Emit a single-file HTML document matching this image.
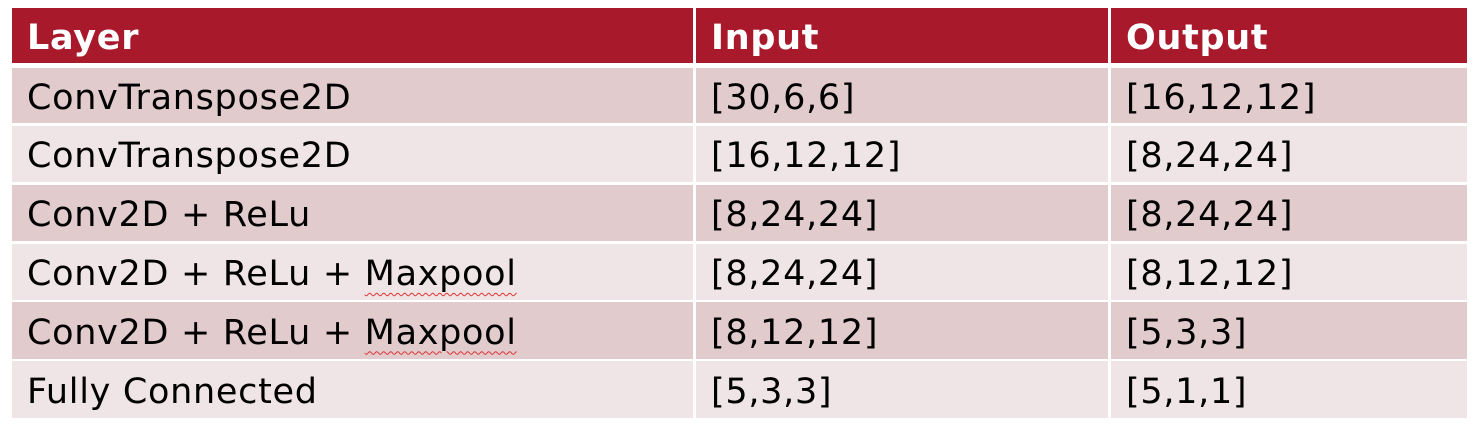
<!DOCTYPE html>
<html><head><meta charset="utf-8"><style>
body{margin:0;width:1480px;height:429px;background:#fff;position:relative;overflow:hidden;font-family:"DejaVu Sans","Liberation Sans",sans-serif;}
.c{position:absolute;box-sizing:border-box;padding-left:15px;padding-top:4px;display:flex;align-items:center;font-size:35px;letter-spacing:0.7px;color:#000;white-space:pre;}
.h{background:#a8192c;color:#fff;font-weight:bold;padding-top:5px;}
.d{background:#e1cbcd;}
.l{background:#efe5e6;}
.sq{text-decoration:underline wavy #d33;text-decoration-thickness:1px;text-underline-offset:7px;}
</style></head><body>
<div class="c h" style="left:12px;top:8px;width:681px;height:55px"><span>Layer</span></div>
<div class="c h" style="left:696px;top:8px;width:412px;height:55px"><span>Input</span></div>
<div class="c h" style="left:1111px;top:8px;width:356px;height:55px"><span>Output</span></div>

<div class="c d" style="left:12px;top:68px;width:681px;height:55px"><span>ConvTranspose2D</span></div>
<div class="c d" style="left:696px;top:68px;width:412px;height:55px"><span>[30,6,6]</span></div>
<div class="c d" style="left:1111px;top:68px;width:356px;height:55px"><span>[16,12,12]</span></div>

<div class="c l" style="left:12px;top:126px;width:681px;height:56px"><span>ConvTranspose2D</span></div>
<div class="c l" style="left:696px;top:126px;width:412px;height:56px"><span>[16,12,12]</span></div>
<div class="c l" style="left:1111px;top:126px;width:356px;height:56px"><span>[8,24,24]</span></div>

<div class="c d" style="left:12px;top:185px;width:681px;height:56px"><span>Conv2D + ReLu</span></div>
<div class="c d" style="left:696px;top:185px;width:412px;height:56px"><span>[8,24,24]</span></div>
<div class="c d" style="left:1111px;top:185px;width:356px;height:56px"><span>[8,24,24]</span></div>

<div class="c l" style="left:12px;top:244px;width:681px;height:56px"><span>Conv2D + ReLu + <span class="sq">Maxpool</span></span></div>
<div class="c l" style="left:696px;top:244px;width:412px;height:56px"><span>[8,24,24]</span></div>
<div class="c l" style="left:1111px;top:244px;width:356px;height:56px"><span>[8,12,12]</span></div>

<div class="c d" style="left:12px;top:302px;width:681px;height:57px"><span>Conv2D + ReLu + <span class="sq">Maxpool</span></span></div>
<div class="c d" style="left:696px;top:302px;width:412px;height:57px"><span>[8,12,12]</span></div>
<div class="c d" style="left:1111px;top:302px;width:356px;height:57px"><span>[5,3,3]</span></div>

<div class="c l" style="left:12px;top:361px;width:681px;height:57px"><span>Fully Connected</span></div>
<div class="c l" style="left:696px;top:361px;width:412px;height:57px"><span>[5,3,3]</span></div>
<div class="c l" style="left:1111px;top:361px;width:356px;height:57px"><span>[5,1,1]</span></div>
</body></html>
